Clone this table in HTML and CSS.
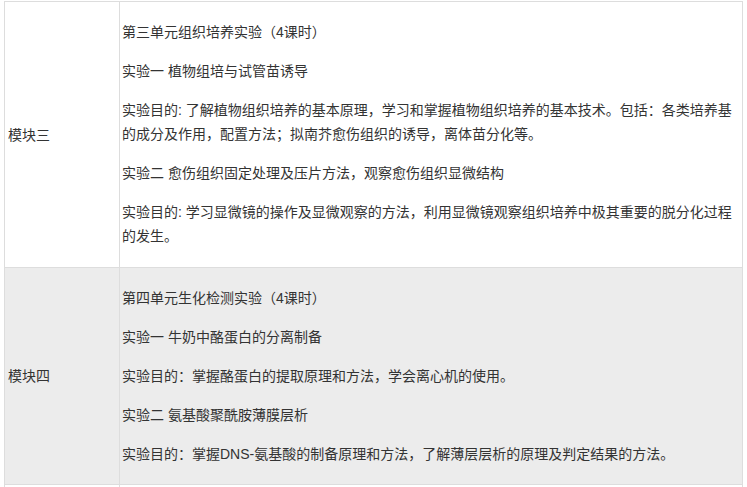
FILE: index.html
```html
<!DOCTYPE html>
<html lang="zh-CN">
<head>
    <meta charset="UTF-8">
    <meta name="viewport" content="width=device-width, initial-scale=1.0">
    <title>实验课程安排</title>
    <link rel="stylesheet" href="styles.css">
</head>
<body>
    <table class="course-table">
        <tr class="row-plain">
            <td class="module">模块三</td>
            <td class="detail">
                <p>第三单元组织培养实验（4课时）</p>
                <p>实验一 植物组培与试管苗诱导</p>
                <p>实验目的: 了解植物组织培养的基本原理，学习和掌握植物组织培养的基本技术。包括：各类培养基的成分及作用，配置方法；拟南芥愈伤组织的诱导，离体苗分化等。</p>
                <p>实验二 愈伤组织固定处理及压片方法，观察愈伤组织显微结构</p>
                <p>实验目的: 学习显微镜的操作及显微观察的方法，利用显微镜观察组织培养中极其重要的脱分化过程的发生。</p>
            </td>
        </tr>
        <tr class="row-grey">
            <td class="module">模块四</td>
            <td class="detail">
                <p>第四单元生化检测实验（4课时）</p>
                <p>实验一 牛奶中酪蛋白的分离制备</p>
                <p>实验目的：掌握酪蛋白的提取原理和方法，学会离心机的使用。</p>
                <p>实验二 氨基酸聚酰胺薄膜层析</p>
                <p>实验目的：掌握DNS-氨基酸的制备原理和方法，了解薄层层析的原理及判定结果的方法。</p>
            </td>
        </tr>
        <tr class="row-plain">
            <td class="module"></td>
            <td class="detail"></td>
        </tr>
    </table>
</body>
</html>
```

FILE: styles.css
```css
body {
    margin: 0;
    padding: 1px 4px 0 4px;
    background-color: #fff;
    color: #333;
    font-family: "Liberation Sans", "Noto Sans CJK SC", sans-serif;
    font-size: 14px;
    line-height: 24px;
    text-spacing-trim: space-all;
}
.course-table {
    border-collapse: collapse;
    width: 739px;
}
.course-table td {
    border: 1px solid #dddddd;
    vertical-align: middle;
}
.module {
    width: 108px;
    padding: 0 3px;
}
.detail {
    padding: 3px 2px 3px 2px;
}
.row-plain .detail {
    padding-bottom: 4px;
}
.row-grey td {
    background-color: #ececec;
}
.detail p {
    margin: 15px 0;
}
```
